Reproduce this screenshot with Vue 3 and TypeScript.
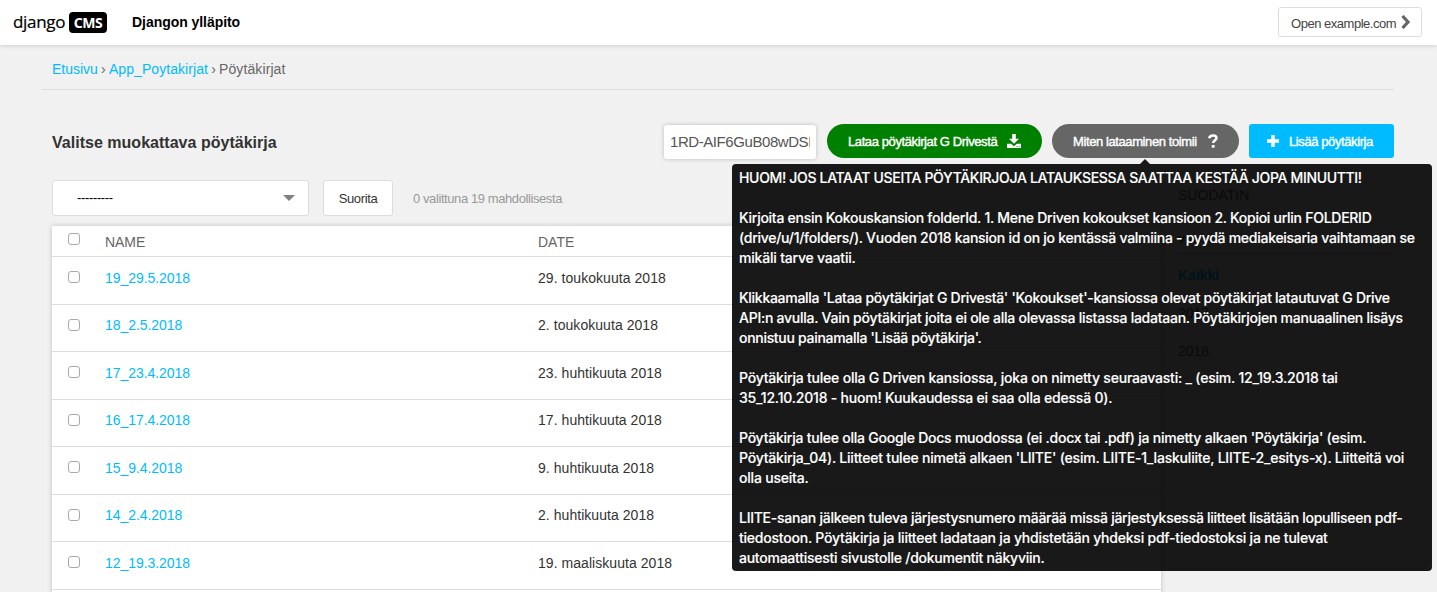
<script setup lang="ts">
interface Row { name: string; date: string }
interface Line { text: string; ls: number }

const rows: Row[] = [
  { name: '19_29.5.2018', date: '29. toukokuuta 2018' },
  { name: '18_2.5.2018', date: '2. toukokuuta 2018' },
  { name: '17_23.4.2018', date: '23. huhtikuuta 2018' },
  { name: '16_17.4.2018', date: '17. huhtikuuta 2018' },
  { name: '15_9.4.2018', date: '9. huhtikuuta 2018' },
  { name: '14_2.4.2018', date: '2. huhtikuuta 2018' },
  { name: '12_19.3.2018', date: '19. maaliskuuta 2018' },
]

const line = (text: string, ls = -0.2): Line => ({ text, ls })

const help: Line[][] = [
  [line('HUOM! JOS LATAAT USEITA PÖYTÄKIRJOJA LATAUKSESSA SAATTAA KESTÄÄ JOPA MINUUTTI!', -0.33)],
  [
    line('Kirjoita ensin Kokouskansion folderId. 1. Mene Driven kokoukset kansioon 2. Kopioi urlin FOLDERID', -0.27),
    line('(drive/u/1/folders/). Vuoden 2018 kansion id on jo kentässä valmiina - pyydä mediakeisaria vaihtamaan se', -0.27),
    line('mikäli tarve vaatii.', -0.2),
  ],
  [
    line("Klikkaamalla 'Lataa pöytäkirjat G Drivestä' 'Kokoukset'-kansiossa olevat pöytäkirjat latautuvat G Drive", -0.28),
    line('API:n avulla. Vain pöytäkirjat joita ei ole alla olevassa listassa ladataan. Pöytäkirjojen manuaalinen lisäys', -0.255),
    line("onnistuu painamalla 'Lisää pöytäkirja'.", -0.3),
  ],
  [
    line('Pöytäkirja tulee olla G Driven kansiossa, joka on nimetty seuraavasti: _ (esim. 12_19.3.2018 tai', -0.21),
    line('35_12.10.2018 - huom! Kuukaudessa ei saa olla edessä 0).'),
  ],
  [
    line("Pöytäkirja tulee olla Google Docs muodossa (ei .docx tai .pdf) ja nimetty alkaen 'Pöytäkirja' (esim.", -0.235),
    line("Pöytäkirja_04). Liitteet tulee nimetä alkaen 'LIITE' (esim. LIITE-1_laskuliite, LIITE-2_esitys-x). Liitteitä voi", -0.21),
    line('olla useita.'),
  ],
  [
    line('LIITE-sanan jälkeen tuleva järjestysnumero määrää missä järjestyksessä liitteet lisätään lopulliseen pdf-', -0.265),
    line('tiedostoon. Pöytäkirja ja liitteet ladataan ja yhdistetään yhdeksi pdf-tiedostoksi ja ne tulevat', -0.22),
    line('automaattisesti sivustolle /dokumentit näkyviin.', -0.25),
  ],
]
</script>

<template>
  <div class="page">
    <header class="top">
      <div class="logo"><span class="dj">django</span><span class="cms">CMS</span></div>
      <strong class="site">Djangon ylläpito</strong>
      <a class="open"><span>Open example.com</span>
        <svg width="10" height="14" viewBox="0 0 10 14"><path d="M1.500 1 7 7l-5.500 6" fill="none" stroke="#666" stroke-width="3.200" /></svg>
      </a>
    </header>

    <nav class="crumbs">
      <a>Etusivu</a><i>›</i><a class="app">App_Poytakirjat</a><i>›</i><span class="here">Pöytäkirjat</span>
    </nav>

    <section class="head">
      <h1>Valitse muokattava pöytäkirja</h1>
      <div class="tools">
        <div class="field"><span>1RD-AIF6GuB08wDSF</span></div>
        <a class="btn green"><span>Lataa pöytäkirjat G Drivestä</span>
          <svg width="14" height="14" viewBox="0 0 14 14" fill="#fff"><path d="M5.200 0h3.600v4.800H12L7 9.800 2 4.800h3.200z" /><path d="M0 9.800h4l3 2.400 3-2.400h4V14H0z" /><path d="M9.500 12.300h1v.8h-1zM11.600 12.300h1v.8h-1z" fill="#008000" /></svg>
        </a>
        <div class="anchor">
          <a class="btn grey"><span>Miten lataaminen toimii</span>
            <svg width="10" height="14" viewBox="0 0 10 14"><path d="M1.200 4.200C1.600 2.200 3 1.400 5 1.400c2.200 0 3.500 1.100 3.500 2.600 0 2.300-3.300 2.300-3.300 5" fill="none" stroke="#fff" stroke-width="2.500" /><path d="M3.800 11h2.800v2.700H3.800z" fill="#fff" /></svg>
          </a>
          <div class="tip">
            <div v-for="(p, i) in help" :key="i" class="para">
              <div v-for="l in p" :key="l.text"><span :style="{ letterSpacing: l.ls + 'px' }">{{ l.text }}</span></div>
            </div>
          </div>
        </div>
        <a class="btn blue">
          <svg width="12" height="12" viewBox="0 0 12 12"><path d="M6 0v12M0 6h12" stroke="#fff" stroke-width="3.400" /></svg>
          <span>Lisää pöytäkirja</span>
        </a>
      </div>
    </section>

    <div class="cols">
      <main>
        <div class="actions">
          <div class="select"><span>---------</span>
            <svg width="12" height="6" viewBox="0 0 12 6"><path d="M0 0h12L6 6z" fill="#808080" /></svg>
          </div>
          <button>Suorita</button>
          <span class="count">0 valittuna 19 mahdollisesta</span>
        </div>
        <div class="table">
          <div class="tr th"><i class="cb" /><span class="name">NAME</span><span>DATE</span></div>
          <div v-for="r in rows" :key="r.name" class="tr"><i class="cb" /><a class="name">{{ r.name }}</a><span class="date">{{ r.date }}</span></div>
          <div class="tr" />
        </div>
      </main>
      <aside>
        <h2>SUODATIN</h2>
        <h3>vuosi</h3>
        <ul>
          <li class="on">Kaikki</li>
          <li>2017</li>
          <li>2018</li>
        </ul>
      </aside>
    </div>
  </div>
</template>

<style>
html, body { margin: 0; overflow: hidden; background: #f1f1f1; }
</style>

<style scoped>
* { box-sizing: border-box; }
.page { width: 1437px; height: 592px; overflow: hidden; background: #f1f1f1; font: 14px/20px "Liberation Sans", Arial, sans-serif; color: #333; white-space: nowrap; }
a { color: #0bf; }
i { font-style: normal; }
svg { display: block; flex: none; }
.top { display: flex; align-items: center; height: 45px; padding: 0 15px 0 13px; background: #fff; box-shadow: 0 0 5px rgba(0, 0, 0, .2); }
.logo { display: flex; align-items: center; width: 119px; color: #000; font-family: "Open Sans", sans-serif; }
.dj { width: 56px; margin-top: -2px; font-size: 17px; letter-spacing: -.3px; line-height: 20px; -webkit-text-stroke: .2px #000; }
.cms { width: 38px; height: 21px; border-radius: 4px; background: #000; color: #fff; font: bold 14px/21px "Noto Sans", sans-serif; text-align: center; letter-spacing: -.4px; }
.site { margin-top: -2px; color: #000; letter-spacing: -.05px; }
.open { display: flex; align-items: center; gap: 5px; width: 144px; height: 30px; margin: -1px 0 0 auto; padding: 3px 0 0 12px; border: 1px solid #ddd; border-radius: 3px; color: #444; font-size: 13px; letter-spacing: -.48px; }
.open svg { margin-top: -4px; }
.crumbs { display: flex; height: 45px; margin: 0 43px 0 42px; padding: 14px 0 0 10px; border-bottom: 1px solid #ddd; color: #666; }
.crumbs i { width: 11px; text-align: center; }
.crumbs .app { letter-spacing: .07px; }
.crumbs .here { letter-spacing: .1px; }
.head { display: flex; justify-content: space-between; height: 90px; padding: 34px 43px 0 52px; }
h1 { margin: 0; font-size: 16px; line-height: 37px; letter-spacing: .02px; }
.tools { display: flex; align-items: flex-start; }
.field { width: 152px; height: 34px; margin: 1px 11px 0 0; padding: 0 6px; border-radius: 3px; background: #fff; box-shadow: 0 0 4px rgba(0, 0, 0, .22); color: #555; font-size: 15px; line-height: 33px; }
.field span { display: block; overflow: hidden; width: 140px; letter-spacing: -.43px; }
.btn { display: flex; align-items: center; height: 34px; color: #fff; font-size: 13px; letter-spacing: -.4px; -webkit-text-stroke: .4px #fff; }
.btn span { margin-top: 2px; }
.green { width: 215px; margin-right: 10px; padding-left: 21px; gap: 10px; border-radius: 17px; background: #008000; }
.grey { width: 187px; margin-right: 10px; padding-left: 21px; gap: 11px; border-radius: 17px; background: #666; }
.blue { width: 145px; padding-left: 18px; gap: 10px; border-radius: 3px; background: #0bf; }
.anchor { position: relative; }
.tip { position: absolute; z-index: 5; top: 40px; left: -320px; width: 700px; height: 407px; padding: 4px 7px 3px; border-radius: 4px; background: rgba(0, 0, 0, .9); color: #fff; font: 500 14px/20px Inter, sans-serif; -webkit-text-stroke: .15px #fff; }
.tip::before { content: ""; position: absolute; top: -5px; left: 408px; border: 5px solid transparent; border-top: 0; border-bottom-color: rgba(0, 0, 0, .9); }
.para + .para { margin-top: 20px; }
.cols { display: flex; padding-left: 52px; }
main { width: 1109px; }
.actions { display: flex; align-items: center; height: 36px; margin-bottom: 10px; }
.select { display: flex; align-items: center; justify-content: space-between; width: 257px; height: 36px; padding: 0 13px 0 24px; border: 1px solid #ddd; border-radius: 3px; background: #fff; color: #000; font-size: 13px; letter-spacing: -.35px; }
button { width: 70px; height: 36px; margin: 0 20px 0 14px; padding: 2px 0 0; border: 1px solid #ddd; border-radius: 3px; background: #fff; color: #333; font: 13px/20px "Liberation Sans", sans-serif; letter-spacing: -.35px; }
.count { margin-top: 2px; color: #999; font-size: 13px; letter-spacing: -.41px; }
.table { background: #fff; box-shadow: 0 0 5px rgba(0, 0, 0, .2); }
.tr { display: flex; height: 48px; padding: 11px 0 0 16px; border-bottom: 1px solid #ddd; }
.tr:nth-child(odd) { height: 47px; padding-top: 10px; }
.tr.th { height: 31px; padding-top: 6px; color: #666; }
.cb { width: 12px; height: 12px; margin: 3px 25px 0 0; border: 1px solid #a9a9a9; border-radius: 3px; background: #fff; }
.tr:nth-child(odd) .cb { margin-top: 4px; }
.tr.th .cb { margin-top: 1px; }
.name { width: 433px; letter-spacing: -.05px; }
.date { letter-spacing: .05px; }
aside { margin: 4px 0 0 17px; width: 216px; color: #666; }
h2 { height: 47px; margin: 0; font-size: 14px; font-weight: normal; line-height: 22px; }
h3 { height: 23px; margin: 0; border-bottom: 1px solid #ddd; font-size: 13px; line-height: 16px; }
ul { margin: 0; padding: 11px 0 0; list-style: none; }
li { height: 38px; }
.on { color: #0bf; font-weight: bold; }
</style>
